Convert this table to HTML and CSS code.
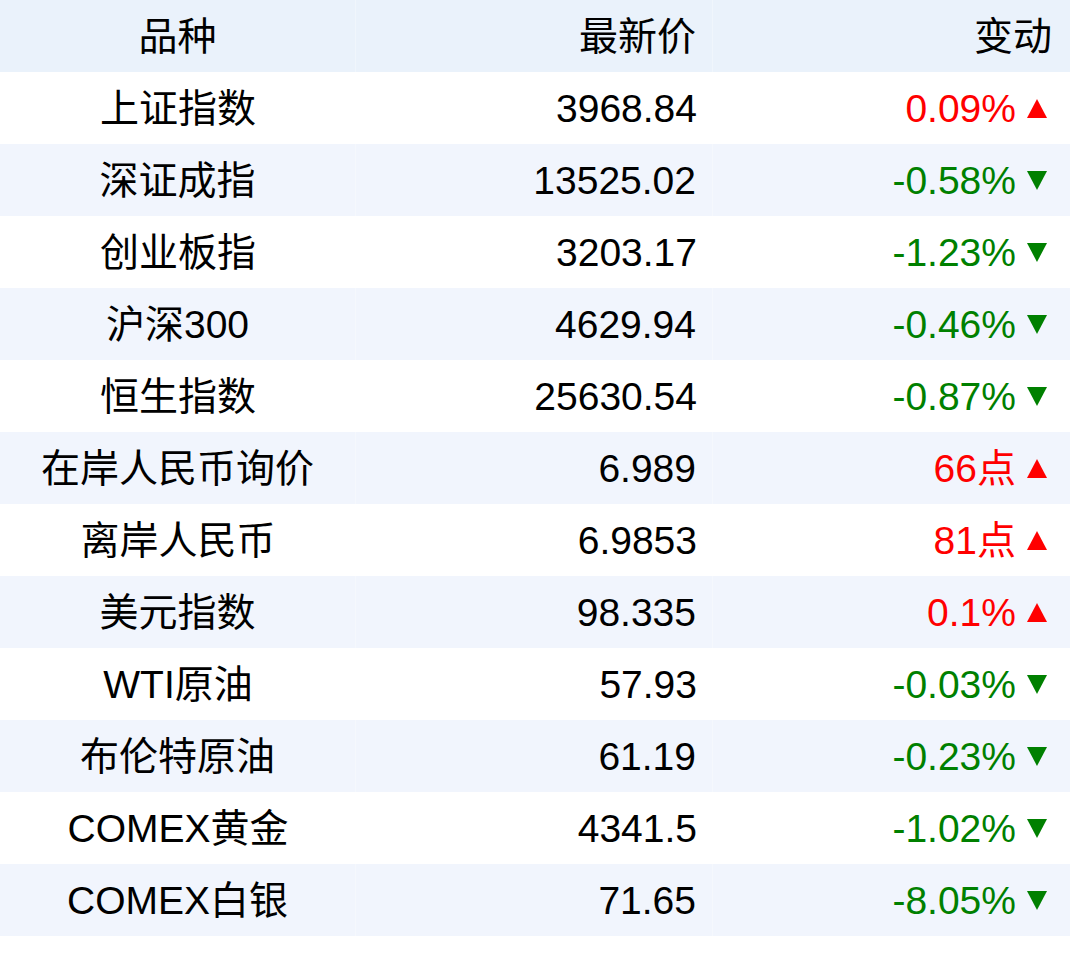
FILE: index.html
```html
<!DOCTYPE html>
<html lang="zh-CN">
<head>
<meta charset="utf-8">
<link rel="stylesheet" href="styles.css">
</head>
<body>
<div class="tbl">
  <div class="row head"><div class="c name">品种</div><div class="c price">最新价</div><div class="c chg">变动</div></div>
  <div class="row"><div class="c name">上证指数</div><div class="c price">3968.84</div><div class="c chg up">0.09%<span class="tri"></span></div></div>
  <div class="row alt"><div class="c name">深证成指</div><div class="c price">13525.02</div><div class="c chg down">-0.58%<span class="tri"></span></div></div>
  <div class="row"><div class="c name">创业板指</div><div class="c price">3203.17</div><div class="c chg down">-1.23%<span class="tri"></span></div></div>
  <div class="row alt"><div class="c name">沪深300</div><div class="c price">4629.94</div><div class="c chg down">-0.46%<span class="tri"></span></div></div>
  <div class="row"><div class="c name">恒生指数</div><div class="c price">25630.54</div><div class="c chg down">-0.87%<span class="tri"></span></div></div>
  <div class="row alt"><div class="c name">在岸人民币询价</div><div class="c price">6.989</div><div class="c chg up">66点<span class="tri"></span></div></div>
  <div class="row"><div class="c name">离岸人民币</div><div class="c price">6.9853</div><div class="c chg up">81点<span class="tri"></span></div></div>
  <div class="row alt"><div class="c name">美元指数</div><div class="c price">98.335</div><div class="c chg up">0.1%<span class="tri"></span></div></div>
  <div class="row"><div class="c name">WTI原油</div><div class="c price">57.93</div><div class="c chg down">-0.03%<span class="tri"></span></div></div>
  <div class="row alt"><div class="c name">布伦特原油</div><div class="c price">61.19</div><div class="c chg down">-0.23%<span class="tri"></span></div></div>
  <div class="row"><div class="c name">COMEX黄金</div><div class="c price">4341.5</div><div class="c chg down">-1.02%<span class="tri"></span></div></div>
  <div class="row alt"><div class="c name">COMEX白银</div><div class="c price">71.65</div><div class="c chg down">-8.05%<span class="tri"></span></div></div>
</div>
</body>
</html>
```
FILE: styles.css
```css
html, body {
  margin: 0;
  padding: 0;
  background: #ffffff;
}
body {
  font-family: "Liberation Sans", "Noto Sans CJK SC", sans-serif;
  color: #000;
}
.tbl {
  width: 1070px;
}
.row {
  display: grid;
  grid-template-columns: 356px 357px 357px;
  height: 72px;
  background: #ffffff;
}
.row.head {
  background: #eaf2fb;
}
.row.alt {
  background: #f1f5fd;
}
.c {
  display: flex;
  align-items: center;
  font-size: 39px;
  line-height: 1;
  white-space: nowrap;
}
.row.head .c, .row.alt .c {
  border-right: 1px solid rgba(255, 255, 255, 0.3);
}
.row .c.chg {
  border-right: none;
}
.name {
  justify-content: center;
}
.price {
  justify-content: flex-end;
  padding-right: 16px;
}
.chg {
  justify-content: flex-end;
  padding-right: 18px;
}
.up { color: #ff0000; }
.down { color: #008000; }
.tri {
  display: inline-block;
  width: 0;
  height: 0;
  margin-left: 11px;
  margin-right: 5px;
  border-left: 10px solid transparent;
  border-right: 10px solid transparent;
}
.up .tri {
  border-bottom: 19px solid #ff0000;
}
.down .tri {
  border-top: 19px solid #008000;
}
```
